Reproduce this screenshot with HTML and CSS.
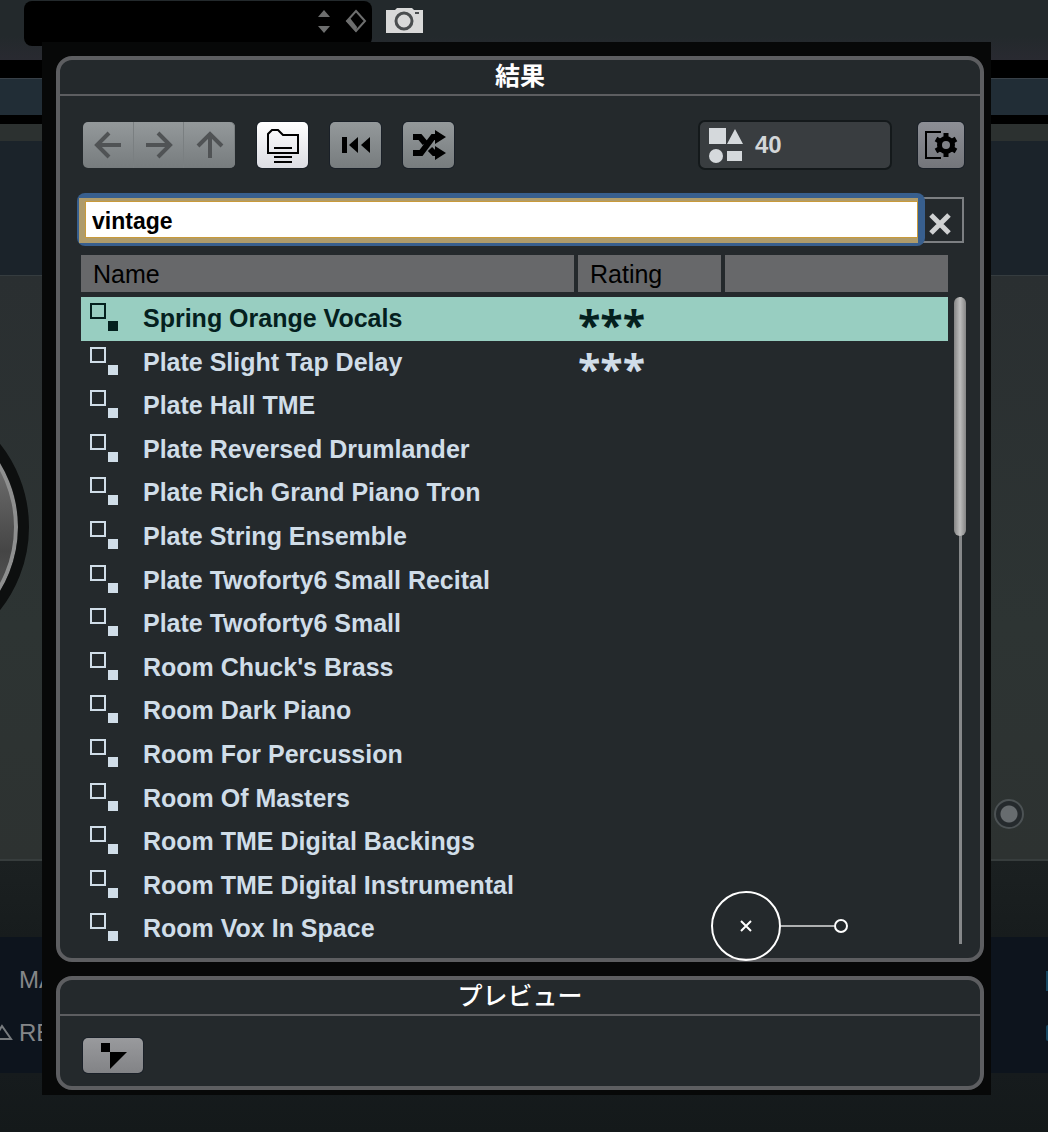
FILE: index.html
```html
<!DOCTYPE html>
<html lang="ja">
<head>
<meta charset="utf-8">
<meta name="viewport" content="width=device-width, initial-scale=1">
<title>結果</title>
<link rel="stylesheet" href="styles.css">
</head>
<body>
<div class="app">
  <header class="app-bar">
    <div class="preset-slot">
      <svg width="12" height="24" viewBox="0 0 12 24" fill="#6d6e6e"><path d="M6 1l6 7H0zM6 24l6-7H0z"/></svg>
      <svg width="22" height="24" viewBox="0 0 22 24"><path d="M11 2l9 10-9 10-9-10z" fill="none" stroke="#6d6e6e" stroke-width="2"/><path d="M1 12l4-3 7 9-1 5z" fill="#6d6e6e"/></svg>
    </div>
    <svg class="camera" width="38" height="26" viewBox="0 0 38 26"><path d="M1 2h8l2-2h15l2 2h9v23H0V2z" fill="#d9d9d9"/><circle cx="18" cy="13" r="8" fill="none" stroke="#4a4d4f" stroke-width="3"/><path d="M29 4h4v2h-4z" fill="#4a4d4f"/></svg>
  </header>
  <div class="band band-line-top"></div>
  <div class="band band-strip"></div>
  <div class="band band-line"></div>
  <div class="band band-lip"></div>
  <div class="band band-display"></div>
  <div class="band band-stage">
    <div class="knob"></div>
    <div class="lamp"></div>
  </div>
  <div class="band band-shade"></div>
  <div class="band band-params">
    <span>MAIN</span>
    <span><svg width="20" height="18" viewBox="0 0 20 18"><path d="M1 16L9 3l9 13z" fill="none" stroke="#777b7e" stroke-width="2"/></svg>REVERB</span>
    <i class="edge"></i>
    <i class="edge edge-round"></i>
  </div>
  <div class="band band-foot"></div>
</div>

<main class="dialog">
  <section class="panel">
    <h1 class="panel-title">結果</h1>
    <div class="toolbar">
      <div class="nav-group">
        <button class="key" aria-label="Back"><svg width="32" height="32" viewBox="0 0 32 32" fill="none" stroke="#505355" stroke-width="4"><path d="M29 16H5M17 4L5 16l12 12"/></svg></button>
        <button class="key" aria-label="Forward"><svg width="32" height="32" viewBox="0 0 32 32" fill="none" stroke="#505355" stroke-width="4"><path d="M3 16h24M15 4l12 12-12 12"/></svg></button>
        <button class="key" aria-label="Up"><svg width="32" height="32" viewBox="0 0 32 32" fill="none" stroke="#505355" stroke-width="4"><path d="M16 29V5M4 17L16 5l12 12"/></svg></button>
      </div>
      <button class="key key-on" aria-label="Browse folders"><svg width="36" height="36" viewBox="0 0 36 36" fill="none" stroke="#000" stroke-width="2"><path d="M3 26V7l4-4h6l5 5h15v18z"/><path d="M9 21h18M9 30h18M9 35h18"/></svg></button>
      <button class="key" aria-label="Reset"><svg width="30" height="18" viewBox="0 0 30 18"><path d="M1 1h5v16H1zM17 1v16L8 9zM29 1v16l-9-8z"/></svg></button>
      <button class="key" aria-label="Shuffle"><svg width="36" height="32" viewBox="0 0 36 32"><path d="M2 8h7l5 6M2 24h8L22 8h6M19 20l4 4h5" fill="none" stroke="#000" stroke-width="6"/><path d="M24 1l11 7-11 7zM24 17l11 7-11 7z"/></svg></button>
      <output class="count"><svg width="35" height="36" viewBox="0 0 35 36" fill="#d5d9dc"><path d="M0 1h17v16H0zM26 2l8 15H18z"/><circle cx="7" cy="29" r="7"/><path d="M18 24h15v10H18z"/></svg>40</output>
      <button class="key key-set" aria-label="Set up window layout"><svg width="34" height="30" viewBox="0 0 34 30"><path d="M17 2H2v26h15" fill="none" stroke="#000" stroke-width="2"/><path d="M22 3v24M12 9l20 12M32 9L12 21" stroke="#000" stroke-width="5"/><circle cx="22" cy="15" r="9"/><circle cx="22" cy="15" r="4" fill="#808288"/></svg></button>
    </div>
    <div class="search">
      <div class="search-ring"><input class="search-input" type="text" value="vintage" aria-label="検索"></div>
      <button class="clear" aria-label="Clear"><svg width="24" height="24" viewBox="0 0 24 24"><path d="M3 3l18 18M21 3L3 21" stroke="#cfd1d2" stroke-width="5"/></svg></button>
    </div>
    <div class="results">
      <table class="list">
        <thead><tr><th>Name</th><th>Rating</th><th></th></tr></thead>
        <tbody>
          <tr class="selected"><td>Spring Orange Vocals</td><td class="stars">***</td><td></td></tr>
          <tr><td>Plate Slight Tap Delay</td><td class="stars">***</td><td></td></tr>
          <tr><td>Plate Hall TME</td><td></td><td></td></tr>
          <tr><td>Plate Reversed Drumlander</td><td></td><td></td></tr>
          <tr><td>Plate Rich Grand Piano Tron</td><td></td><td></td></tr>
          <tr><td>Plate String Ensemble</td><td></td><td></td></tr>
          <tr><td>Plate Twoforty6 Small Recital</td><td></td><td></td></tr>
          <tr><td>Plate Twoforty6 Small</td><td></td><td></td></tr>
          <tr><td>Room Chuck's Brass</td><td></td><td></td></tr>
          <tr><td>Room Dark Piano</td><td></td><td></td></tr>
          <tr><td>Room For Percussion</td><td></td><td></td></tr>
          <tr><td>Room Of Masters</td><td></td><td></td></tr>
          <tr><td>Room TME Digital Backings</td><td></td><td></td></tr>
          <tr><td>Room TME Digital Instrumental</td><td></td><td></td></tr>
          <tr><td>Room Vox In Space</td><td></td><td></td></tr>
        </tbody>
      </table>
      <div class="scroll"><div class="thumb"></div></div>
    </div>
    <svg class="marker" width="140" height="72" viewBox="0 0 140 72" fill="none" stroke="#fff" stroke-width="2"><circle cx="36" cy="36" r="34"/><path d="M31 31l10 10M41 31L31 41"/><path d="M71 36h53" stroke="#aeb0b1"/><circle cx="131" cy="36" r="6"/></svg>
  </section>
  <section class="panel">
    <h2 class="panel-title">プレビュー</h2>
    <div class="preview">
      <button class="key key-view" aria-label="Preview"><svg width="28" height="28" viewBox="0 0 28 28"><path d="M2 1h9v9H2zM11 10h17L11 27z"/></svg></button>
    </div>
  </section>
</main>
</body>
</html>
```
FILE: styles.css
```css
* { box-sizing: border-box; }

body {
  margin: 0;
  position: relative;
  background: #151a1c;
  color: #d0dde8;
  font-family: "Liberation Sans", "Noto Sans CJK JP", sans-serif;
  overflow-x: hidden;
}

/* plug-in window behind the dialog */
.app { overflow: hidden; }
.app-bar {
  display: flex;
  align-items: flex-start;
  gap: 14px;
  height: 60px;
  padding: 1px 24px;
  background: linear-gradient(#23292c 60%, #292a31);
}
.preset-slot {
  display: flex;
  justify-content: flex-end;
  gap: 15px;
  width: 348px;
  height: 45px;
  padding: 8px 5px;
  border-radius: 8px;
  background: #000;
}
.camera { margin-top: 7px; }
.band-line-top { height: 18px; background: #000; }
.band-strip { height: 37px; background: #212d36; border-top: 1px solid #384047; }
.band-line { height: 9px; background: #000; }
.band-lip { height: 17px; background: #2c3130; }
.band-display { height: 135px; background: #1b232a; border-bottom: 1px solid #353c3f; }
.band-stage {
  position: relative;
  height: 585px;
  background: linear-gradient(#2a2f31, #2d3433 60%, #2d3231);
  border-bottom: 2px solid #373d3d;
}
.knob {
  position: absolute;
  left: -239px;
  top: 117px;
  width: 268px;
  height: 268px;
  border: 11px solid #0d0f0f;
  border-radius: 50%;
  background: linear-gradient(#8a8a8a, #454545 60%, #6a6a6a);
  box-shadow: inset 0 0 0 4px #8e8f8f;
}
.lamp {
  position: absolute;
  right: 24px;
  bottom: 30px;
  width: 30px;
  height: 30px;
  border: 2px solid #4c5254;
  border-radius: 50%;
  background: radial-gradient(circle, #676c6f 8px, #252a2d 9px);
}
.band-shade { height: 76px; background: linear-gradient(#1b2021, #171c1d); }
.band-params {
  position: relative;
  display: flex;
  flex-direction: column;
  justify-content: center;
  gap: 25px;
  height: 136px;
  padding: 3px 0 0 19px;
  background: #0d141d;
  color: #858789;
  font-size: 24px;
  line-height: 28px;
}
.band-params svg { margin-left: -26px; margin-right: 6px; }
.edge {
  position: absolute;
  right: 0;
  top: 34px;
  width: 2px;
  height: 20px;
  background: #164660;
}
.edge-round { top: 88px; height: 16px; border-radius: 2px 0 0 2px; }
.band-foot { height: 59px; background: linear-gradient(#161b1d, #14191a); }

/* dialog */
.dialog {
  position: absolute;
  top: 42px;
  left: 42px;
  right: 57px;
  display: flex;
  flex-direction: column;
  gap: 14px;
  padding: 14px 7px 5px 14px;
  background: #070808;
}
.panel {
  position: relative;
  border: 4px solid #5d5e61;
  border-radius: 16px;
  background: #24292c;
}
.panel-title {
  margin: 0;
  height: 36px;
  border-bottom: 2px solid #5d5e61;
  color: #fff;
  font-size: 25px;
  font-weight: 500;
  font-family: "Noto Sans CJK JP", sans-serif;
  line-height: 29px;
  text-align: center;
}
.panel-title:is(h1) { font-weight: 700; }

.toolbar {
  display: flex;
  align-items: center;
  gap: 22px;
  padding: 24px 16px 0 23px;
}
.key {
  display: flex;
  align-items: center;
  justify-content: center;
  width: 51px;
  height: 46px;
  padding: 0;
  border: 0;
  border-radius: 5px;
  background: linear-gradient(#94999b, #777c7e);
  box-shadow: 0 0 0 1px #1a2028;
}
.key-on { background: linear-gradient(#fff, #dcdde3); }
.key-set { width: 46px; margin-left: 4px; background: linear-gradient(#8d8f96, #74767b); }
.key-view { width: 60px; height: 35px; background: linear-gradient(#999a9d, #828386); }
.nav-group { display: flex; width: 152px; }
.nav-group .key {
  flex: 1;
  border-radius: 0;
  box-shadow: inset -1px 0 #7a7f81;
}
.nav-group .key:first-child { border-radius: 5px 0 0 5px; }
.nav-group .key:last-child { border-radius: 0 5px 5px 0; }
.count {
  display: flex;
  align-items: center;
  gap: 11px;
  width: 194px;
  height: 50px;
  margin-left: auto;
  padding-left: 9px;
  border: 2px solid #14191b;
  border-radius: 7px;
  background: #393d40;
  color: #d3d6d8;
  font-size: 24px;
  font-weight: 700;
}

.search {
  display: flex;
  align-items: center;
  padding: 23px 16px 0 17px;
}
.search-ring {
  z-index: 1;
  flex: 1;
  height: 53px;
  padding: 5px 7px 3px 2px;
  border-radius: 8px;
  background: #385f8e;
}
.search-input {
  display: block;
  width: 100%;
  height: 45px;
  padding: 4px 7px 0;
  border: solid #ae9b6b;
  border-width: 3px 0 5px 6px;
  background: #fff;
  box-shadow: inset 0 0 0 1px #c99a3a;
  color: #000;
  font: 700 23px "Liberation Sans", sans-serif;
  outline: 0;
}
.clear {
  display: flex;
  align-items: center;
  justify-content: center;
  width: 45px;
  height: 46px;
  margin-left: -6px;
  padding: 8px 4px 0 0;
  border: 2px solid #7c7f82;
  background: none;
}

.results {
  display: flex;
  gap: 6px;
  padding: 9px 14px 7px 21px;
}
.list {
  flex: 1;
  display: block;
  font-size: 25px;
}
.list thead, .list tbody { display: grid; }
.list tbody { grid-auto-rows: 1fr; height: 654px; margin-top: 5px; }
.list tr {
  display: grid;
  grid-template-columns: 1fr 143px 223px;
  gap: 4px;
}
.list th {
  height: 37px;
  padding: 0 12px;
  background: #67686a;
  color: #000;
  font-weight: 400;
  line-height: 39px;
  text-align: left;
}
.list td {
  height: 43px;
  padding: 0;
  font-weight: 700;
  line-height: 43px;
  white-space: nowrap;
}
.list td:first-child { display: flex; }
.list td:first-child::before {
  content: "";
  width: 28px;
  height: 28px;
  margin: 6px 25px 0 9px;
  background:
    linear-gradient(currentColor, currentColor) 18px 18px / 10px 10px,
    linear-gradient(currentColor, currentColor) 0 0 / 16px 2px,
    linear-gradient(currentColor, currentColor) 0 14px / 16px 2px,
    linear-gradient(currentColor, currentColor) 0 0 / 2px 16px,
    linear-gradient(currentColor, currentColor) 14px 0 / 2px 16px;
  background-repeat: no-repeat;
}
.list .stars {
  font-family: "Open Sans", sans-serif;
  font-size: 41px;
  line-height: 54px;
}
.list .selected { background: #98cec1; color: #04201e; }
.scroll {
  width: 12px;
  height: 647px;
  margin-top: 42px;
  background: linear-gradient(#86888a, #86888a) center / 3px 100% no-repeat;
}
.thumb {
  height: 239px;
  border-radius: 6px;
  background: linear-gradient(90deg, #858585, #bdbdbd 50%, #858585);
}
.marker {
  position: absolute;
  right: 130px;
  bottom: -4px;
}

.preview { padding: 22px 23px 13px; }
```
